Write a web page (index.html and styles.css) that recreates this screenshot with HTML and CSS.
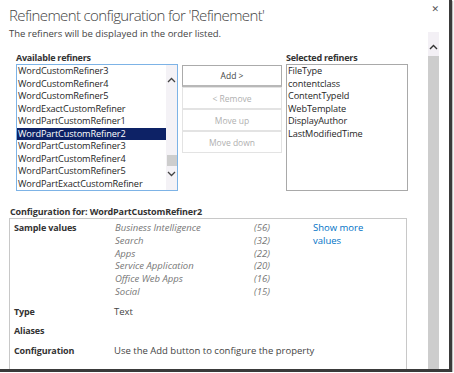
FILE: index.html
```html
<!DOCTYPE html>
<html>
<head>
<meta charset="utf-8">
<link rel="stylesheet" href="styles.css">
</head>
<body>
<div class="window">
  <div class="header">
    <h1 class="title">Refinement configuration for 'Refinement'</h1>
    <span class="close">&#x2715;</span>
  </div>
  <div class="main">
    <div class="content">
      <p class="subtitle">The refiners will be displayed in the order listed.</p>
      <div class="pickers">
        <div class="col">
          <div class="label">Available refiners</div>
          <div class="listbox focused">
            <ul class="items">
              <li>WordCustomRefiner3</li>
              <li>WordCustomRefiner4</li>
              <li>WordCustomRefiner5</li>
              <li>WordExactCustomRefiner</li>
              <li>WordPartCustomRefiner1</li>
              <li class="selected">WordPartCustomRefiner2</li>
              <li>WordPartCustomRefiner3</li>
              <li>WordPartCustomRefiner4</li>
              <li>WordPartCustomRefiner5</li>
              <li>WordPartExactCustomRefiner</li>
            </ul>
            <div class="lscroll">
              <svg class="chev up" width="9" height="6" viewBox="0 0 9 6"><path d="M1 5 L4.5 1.5 L8 5" fill="none" stroke="#444" stroke-width="1.3"/></svg>
              <div class="spacer"></div>
              <div class="lthumb"></div>
              <svg class="chev down" width="9" height="6" viewBox="0 0 9 6"><path d="M1 1 L4.5 4.5 L8 1" fill="none" stroke="#444" stroke-width="1.3"/></svg>
            </div>
          </div>
        </div>
        <div class="buttons">
          <button class="btn primary">Add &gt;</button>
          <button class="btn disabled">&lt; Remove</button>
          <button class="btn disabled">Move up</button>
          <button class="btn disabled">Move down</button>
        </div>
        <div class="col">
          <div class="label">Selected refiners</div>
          <div class="listbox plain">
            <ul class="items">
              <li>FileType</li>
              <li>contentclass</li>
              <li>ContentTypeId</li>
              <li>WebTemplate</li>
              <li>DisplayAuthor</li>
              <li>LastModifiedTime</li>
            </ul>
          </div>
        </div>
      </div>
      <div class="config-label">Configuration for: WordPartCustomRefiner2</div>
      <div class="config">
        <div class="row sample-row">
          <div class="key">Sample values</div>
          <div class="samples">
            <span class="sv">Business Intelligence</span><span class="cnt">(56)</span>
            <span class="sv">Search</span><span class="cnt">(32)</span>
            <span class="sv">Apps</span><span class="cnt">(22)</span>
            <span class="sv">Service Application</span><span class="cnt">(20)</span>
            <span class="sv">Office Web Apps</span><span class="cnt">(16)</span>
            <span class="sv">Social</span><span class="cnt">(15)</span>
          </div>
          <a class="more">Show more values</a>
        </div>
        <div class="row">
          <div class="key">Type</div>
          <div class="val">Text</div>
        </div>
        <div class="row">
          <div class="key">Aliases</div>
          <div class="val"></div>
        </div>
        <div class="row">
          <div class="key">Configuration</div>
          <div class="val">Use the Add button to configure the property</div>
        </div>
      </div>
    </div>
    <div class="vscroll">
      <div class="vtop">
        <svg width="9" height="6" viewBox="0 0 9 6"><path d="M1 5 L4.5 1.5 L8 5" fill="none" stroke="#333" stroke-width="1.4"/></svg>
      </div>
      <div class="vthumb"></div>
    </div>
  </div>
</div>
</body>
</html>
```

FILE: styles.css
```css
* { box-sizing: border-box; }
html, body { margin: 0; padding: 0; background: #fff; }
body {
  font-family: "Open Sans", "DejaVu Sans", sans-serif;
  font-size: 10px;
  color: #444;
}
.window {
  width: 452px;
  height: 372px;
  border-right: 3px solid #3a3a3a;
  border-bottom: 3px solid #3a3a3a;
  box-shadow: 1px 1px 1px rgba(0,0,0,0.25);
  overflow: hidden;
  display: flex;
  flex-direction: column;
  background: #fff;
}
.header {
  height: 28px;
  flex: none;
  display: flex;
  justify-content: space-between;
  align-items: flex-start;
  padding-left: 9px;
  padding-right: 10px;
}
.title {
  margin: 5px 0 0;
  font-size: 15px;
  line-height: 20px;
  font-weight: 300;
  color: #444;
  letter-spacing: -0.62px;
}
.close {
  font-size: 9px;
  color: #555;
  margin-top: 2px;
}
.main {
  flex: 1;
  display: flex;
  min-height: 0;
}
.content {
  width: 428px;
  padding-left: 9px;
  flex: none;
}
.subtitle {
  margin: 0;
  height: 23px;
  font-size: 9.5px;
  line-height: 12px;
}
.pickers {
  display: flex;
  gap: 4px;
  padding-left: 7px;
  align-items: flex-start;
}
.col { display: flex; flex-direction: column; }
.label {
  font-weight: 700;
  font-size: 9px;
  line-height: 13px;
  color: #333;
  letter-spacing: -0.25px;
}
.listbox {
  height: 127px;
  display: flex;
  background: #fff;
}
.listbox.focused { width: 162px; border: 1px solid #7db3e6; }
.listbox.plain { width: 122px; border: 1px solid #a9a9a9; }
.items {
  list-style: none;
  margin: 0;
  padding: 0;
  flex: 1;
  font-size: 9.2px;
  line-height: 12.5px;
  color: #262626;
  letter-spacing: -0.12px;
}
.items li { padding-left: 1px; white-space: nowrap; }
.items li.selected { background: #0d2266; color: #fff; }
.lscroll {
  width: 11px;
  flex: none;
  background: #f4f2f6;
  display: flex;
  flex-direction: column;
  align-items: center;
}
.chev.up { margin-top: 12px; }
.spacer { flex: 1; }
.lthumb { width: 10px; height: 11px; background: #cdcdcd; }
.chev.down { margin-top: 5px; margin-bottom: 13px; }
.buttons {
  display: flex;
  flex-direction: column;
  margin-top: 14px;
  width: 100px;
}
.btn {
  height: 22px;
  font-family: inherit;
  font-size: 8.5px;
  background: #fff;
  border: 1px solid #e3e3e3;
  color: #b0b0b0;
  padding: 0;
  margin: 0;
}
.btn.primary {
  border: 1px solid #ababab;
  border-bottom: 2px solid #b8b8b8;
  color: #444;
}
.config-label {
  font-weight: 700;
  font-size: 9px;
  line-height: 12px;
  color: #333;
  margin-top: 15px;
  padding-left: 1px;
  letter-spacing: -0.15px;
}
.config {
  width: 398px;
  border: 1px solid #c8c8c8;
  border-bottom: none;
  padding: 3px 0 0 4px;
  height: 200px;
}
.row {
  display: grid;
  grid-template-columns: 100px 1fr;
  min-height: 19.5px;
  line-height: 12.8px;
  font-size: 9.5px;
}
.sample-row {
  grid-template-columns: 101px 198px 1fr;
  margin-bottom: 7px;
}
.key { font-weight: 700; color: #333; font-size: 9px; letter-spacing: -0.15px; }
.samples {
  display: grid;
  grid-template-columns: 139px 1fr;
  font-style: italic;
  color: #777;
}
.more {
  color: #0072c6;
  width: 60px;
}
.vscroll {
  width: 11px;
  flex: none;
  margin-top: 4px;
  display: flex;
  flex-direction: column;
}
.vtop {
  height: 24px;
  background: #f3f0f5;
  display: flex;
  justify-content: center;
  padding-top: 12px;
}
.vthumb { flex: 1; background: #cdcdcd; }
```
